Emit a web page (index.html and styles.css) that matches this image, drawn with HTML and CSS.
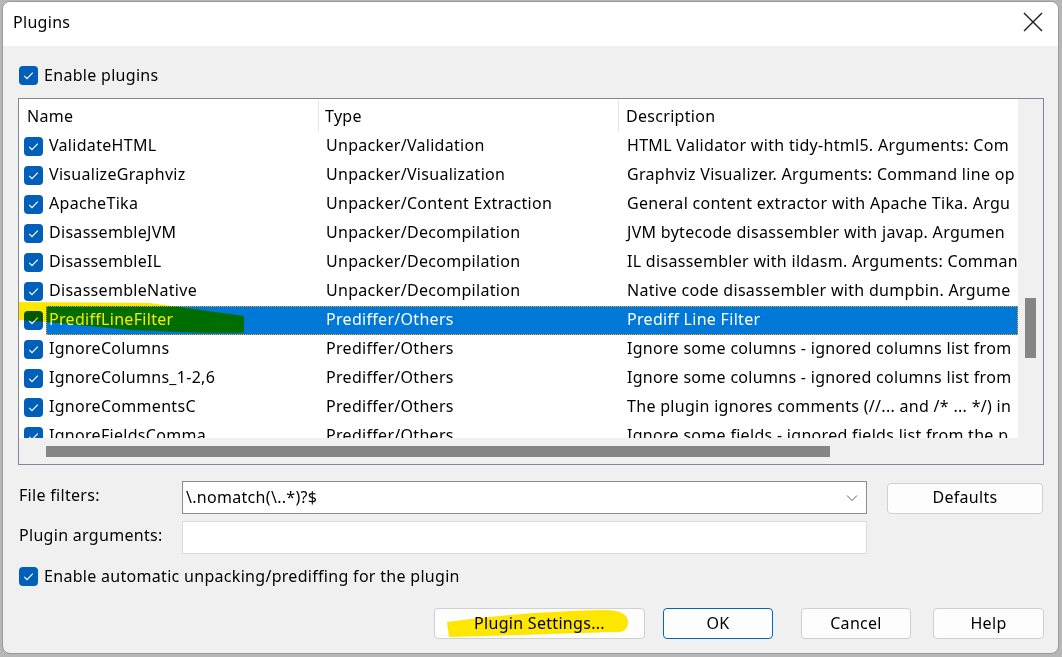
FILE: index.html
```html
<!DOCTYPE html>
<html>
<head>
<meta charset="utf-8">
<link rel="stylesheet" href="styles.css">
</head>
<body>
<div class="dialog">
  <div class="titlebar">
    <span class="title">Plugins</span>
    <svg class="close" width="20" height="20" viewBox="0 0 20 20"><path d="M1 1 L19 19 M19 1 L1 19" stroke="#1b1b1b" stroke-width="1.4" fill="none"/></svg>
  </div>
  <div class="content">
    <label class="check-row">
      <span class="cb"><svg width="19" height="19" viewBox="0 0 19 19"><path d="M5.2 9.8 L8 12.6 L13.8 6.6" stroke="#fff" stroke-width="1.2" fill="none"/></svg></span>
      <span class="cb-text">Enable plugins</span>
    </label>

    <div class="listbox">
      <div class="list-main">
        <div class="list-head">
          <div class="hcol c-name">Name</div>
          <div class="hcol c-type">Type</div>
          <div class="hcol c-desc">Description</div>
        </div>
        <div class="rows">
          <div class="row"><span class="cb small"><svg width="19" height="19" viewBox="0 0 19 19"><path d="M5.2 9.8 L8 12.6 L13.8 6.6" stroke="#fff" stroke-width="1.2" fill="none"/></svg></span><div class="cells"><span class="r-name">ValidateHTML</span><span class="r-type">Unpacker/Validation</span><span class="r-desc">HTML Validator with tidy-html5. Arguments: Com</span></div></div>
          <div class="row"><span class="cb small"><svg width="19" height="19" viewBox="0 0 19 19"><path d="M5.2 9.8 L8 12.6 L13.8 6.6" stroke="#fff" stroke-width="1.2" fill="none"/></svg></span><div class="cells"><span class="r-name">VisualizeGraphviz</span><span class="r-type">Unpacker/Visualization</span><span class="r-desc">Graphviz Visualizer. Arguments: Command line op</span></div></div>
          <div class="row"><span class="cb small"><svg width="19" height="19" viewBox="0 0 19 19"><path d="M5.2 9.8 L8 12.6 L13.8 6.6" stroke="#fff" stroke-width="1.2" fill="none"/></svg></span><div class="cells"><span class="r-name">ApacheTika</span><span class="r-type">Unpacker/Content Extraction</span><span class="r-desc">General content extractor with Apache Tika. Argu</span></div></div>
          <div class="row"><span class="cb small"><svg width="19" height="19" viewBox="0 0 19 19"><path d="M5.2 9.8 L8 12.6 L13.8 6.6" stroke="#fff" stroke-width="1.2" fill="none"/></svg></span><div class="cells"><span class="r-name">DisassembleJVM</span><span class="r-type">Unpacker/Decompilation</span><span class="r-desc">JVM bytecode disassembler with javap. Argumen</span></div></div>
          <div class="row"><span class="cb small"><svg width="19" height="19" viewBox="0 0 19 19"><path d="M5.2 9.8 L8 12.6 L13.8 6.6" stroke="#fff" stroke-width="1.2" fill="none"/></svg></span><div class="cells"><span class="r-name">DisassembleIL</span><span class="r-type">Unpacker/Decompilation</span><span class="r-desc">IL disassembler with ildasm. Arguments: Comman</span></div></div>
          <div class="row"><span class="cb small"><svg width="19" height="19" viewBox="0 0 19 19"><path d="M5.2 9.8 L8 12.6 L13.8 6.6" stroke="#fff" stroke-width="1.2" fill="none"/></svg></span><div class="cells"><span class="r-name">DisassembleNative</span><span class="r-type">Unpacker/Decompilation</span><span class="r-desc">Native code disassembler with dumpbin. Argume</span></div></div>
          <div class="row selected"><span class="cb small"><svg width="19" height="19" viewBox="0 0 19 19"><path d="M5.2 9.8 L8 12.6 L13.8 6.6" stroke="#fff" stroke-width="1.2" fill="none"/></svg></span><div class="cells"><span class="r-name">PrediffLineFilter</span><span class="r-type">Prediffer/Others</span><span class="r-desc">Prediff Line Filter</span></div></div>
          <div class="row"><span class="cb small"><svg width="19" height="19" viewBox="0 0 19 19"><path d="M5.2 9.8 L8 12.6 L13.8 6.6" stroke="#fff" stroke-width="1.2" fill="none"/></svg></span><div class="cells"><span class="r-name">IgnoreColumns</span><span class="r-type">Prediffer/Others</span><span class="r-desc">Ignore some columns - ignored columns list from</span></div></div>
          <div class="row"><span class="cb small"><svg width="19" height="19" viewBox="0 0 19 19"><path d="M5.2 9.8 L8 12.6 L13.8 6.6" stroke="#fff" stroke-width="1.2" fill="none"/></svg></span><div class="cells"><span class="r-name">IgnoreColumns_1-2,6</span><span class="r-type">Prediffer/Others</span><span class="r-desc">Ignore some columns - ignored columns list from</span></div></div>
          <div class="row"><span class="cb small"><svg width="19" height="19" viewBox="0 0 19 19"><path d="M5.2 9.8 L8 12.6 L13.8 6.6" stroke="#fff" stroke-width="1.2" fill="none"/></svg></span><div class="cells"><span class="r-name">IgnoreCommentsC</span><span class="r-type">Prediffer/Others</span><span class="r-desc">The plugin ignores comments (//... and /* ... */) in</span></div></div>
          <div class="row"><span class="cb small"><svg width="19" height="19" viewBox="0 0 19 19"><path d="M5.2 9.8 L8 12.6 L13.8 6.6" stroke="#fff" stroke-width="1.2" fill="none"/></svg></span><div class="cells"><span class="r-name">IgnoreFieldsComma</span><span class="r-type">Prediffer/Others</span><span class="r-desc">Ignore some fields - ignored fields list from the p</span></div></div>
        </div>
      </div>
      <div class="vscroll"><div class="vthumb"></div></div>
      <div class="hscroll"><div class="hthumb"></div></div>
      <div class="corner"></div>
    </div>

    <div class="form-row first">
      <span class="lbl">File filters:</span>
      <div class="combo">
        <span class="combo-text">\.nomatch(\..*)?$</span>
        <span class="combo-btn"><svg width="12" height="8" viewBox="0 0 12 8"><path d="M1 1.5 L6 6.5 L11 1.5" stroke="#606060" stroke-width="1" fill="none"/></svg></span>
      </div>
      <button class="btn defaults">Defaults</button>
    </div>
    <div class="form-row second">
      <span class="lbl">Plugin arguments:</span>
      <div class="textbox"></div>
    </div>

    <label class="check-row auto">
      <span class="cb"><svg width="19" height="19" viewBox="0 0 19 19"><path d="M5.2 9.8 L8 12.6 L13.8 6.6" stroke="#fff" stroke-width="1.2" fill="none"/></svg></span>
      <span class="cb-text">Enable automatic unpacking/prediffing for the plugin</span>
    </label>

    <div class="buttons">
      <button class="btn settings">Plugin Settings...</button>
      <button class="btn ok">OK</button>
      <button class="btn cancel">Cancel</button>
      <button class="btn help">Help</button>
    </div>
  </div>
</div>
<svg class="marks" width="1062" height="657" viewBox="0 0 1062 657">
  <path d="M19 302 L150 303 L244 316 L244 333 L205 333 L130 330 L47 322 L19 320 Z" fill="#ffe800"/>
  <path d="M447 622 Q520 612 600 610 Q628 609 628 622 Q628 634 612 632 L520 635 L449 637 Z" fill="#ffe800"/>
</svg>
</body>
</html>
```
FILE: styles.css
```css
* { box-sizing: border-box; }
html, body { margin: 0; padding: 0; }
body {
  width: 1062px;
  height: 657px;
  overflow: hidden;
  background: #b6b6b6;
  font-family: "Noto Sans", "Open Sans", sans-serif;
  font-size: 16px;
  letter-spacing: 0.3px;
  color: #000;
  position: relative;
}
.dialog {
  margin: 1px 0 0 2px;
  width: 1057px;
  height: 653px;
  background: #f0f0f0;
  border: 1px solid #9a9a9a;
  border-radius: 8px;
  overflow: hidden;
  display: flex;
  flex-direction: column;
}
.titlebar {
  height: 44px;
  background: #fff;
  display: flex;
  align-items: center;
  justify-content: space-between;
  padding: 0 15px 0 10px;
  flex: none;
}
.title { position: relative; top: -2px; }
.close { margin-top: -5px; }
.content {
  padding: 20px 0 0 15px;
  display: flex;
  flex-direction: column;
}
.check-row {
  display: flex;
  align-items: center;
  height: 19px;
  margin-left: 1px;
  gap: 6px;
}
.cb-text { position: relative; top: -1px; }
.cb {
  width: 19px;
  height: 19px;
  border-radius: 4px;
  background: #005fb8;
  display: block;
  flex: none;
}
.cb svg { display: block; }

.listbox {
  margin-top: 13px;
  width: 1026px;
  height: 367px;
  border: 1px solid #828790;
  background: #fff;
  display: grid;
  grid-template-columns: 1fr 25px;
  grid-template-rows: 1fr 26px;
}
.list-main { overflow: hidden; }
.list-head {
  height: 33px;
  display: flex;
  align-items: center;
}
.hcol { height: 31px; display: flex; align-items: center; padding-top: 1px; }
.c-name { width: 300px; padding-left: 8px; border-right: 1px solid #e5e5e5; }
.c-type { width: 300px; padding-left: 6px; border-right: 1px solid #e5e5e5; }
.c-desc { padding-left: 7px; }
.rows { display: flex; flex-direction: column; }
.row {
  height: 29px;
  flex: none;
  display: flex;
  align-items: center;
  white-space: nowrap;
}
.row .cb.small { margin-left: 5px; margin-right: 3px; }
.cells {
  flex: 1;
  height: 29px;
  display: flex;
  align-items: center;
  overflow: hidden;
  padding-left: 3px;
  padding-bottom: 3px;
}
.r-name { width: 277px; flex: none; }
.r-type { width: 301px; flex: none; }
.r-desc { flex: none; }
.row.selected .cells {
  background: #0078d7;
  color: #fff;
  outline: 1px dotted #f5a623;
  outline-offset: -1px;
}
.vscroll { background: #f0f0f0; padding-top: 199px; padding-left: 7px; }
.vthumb { width: 11px; height: 60px; background: #858585; }
.hscroll { background: #f0f0f0; padding: 8px 0 0 27px; }
.hthumb { width: 784px; height: 11px; background: #858585; }
.corner { background: #f0f0f0; }

.form-row {
  display: flex;
  align-items: center;
  width: 1026px;
  height: 33px;
}
.form-row.first { margin-top: 16px; }
.form-row.second { margin-top: 7px; }
.lbl { width: 164px; padding-left: 1px; flex: none; position: relative; top: -3px; }
.combo {
  width: 685px;
  height: 33px;
  border: 1px solid #8c8c8c;
  background: #fff;
  display: flex;
  align-items: center;
  justify-content: space-between;
  padding-left: 3px;
  padding-bottom: 2px;
}
.combo-btn { width: 28px; display: flex; justify-content: center; padding-top: 3px; }
.textbox {
  width: 685px;
  height: 33px;
  border: 1px solid #dcdcdc;
  background: #fff;
}
.btn {
  font-family: inherit;
  font-size: 16px;
  letter-spacing: 0.3px;
  color: #000;
  background: #fdfdfd;
  border: 1px solid #d0d0d0;
  border-radius: 4px;
  height: 31px;
  padding: 0 0 2px 0;
}
.defaults { width: 156px; height: 31px; margin-left: 20px; margin-top: 1px; }
.check-row.auto { margin-top: 13px; }
.buttons {
  margin-top: 22px;
  width: 1026px;
  display: flex;
  justify-content: flex-end;
}
.settings { width: 211px; }
.ok { width: 110px; margin-left: 18px; border-color: #0067c0; }
.cancel { width: 110px; margin-left: 28px; }
.help { width: 111px; margin-left: 22px; }
.marks {
  position: absolute;
  left: 0;
  top: 0;
  mix-blend-mode: multiply;
  pointer-events: none;
}
```
